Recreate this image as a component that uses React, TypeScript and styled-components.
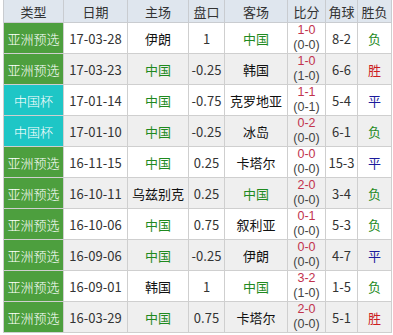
import React from 'react';
import styled, { createGlobalStyle } from 'styled-components';

const Global = createGlobalStyle`
  body {
    margin: 0;
    background: #fff;
    font-family: "Noto Sans CJK SC", "DejaVu Sans", sans-serif;
  }
`;

const Wrap = styled.div`
  padding-left: 3px;
  margin-top: -1px;
`;

const Table = styled.table`
  border-collapse: collapse;
  table-layout: fixed;
  width: 389px;
  font-size: 13px;
  color: #333;
`;

const Head = styled.th<{ w: number }>`
  width: ${p => p.w}px;
  height: 22px;
  padding: 0;
  background: #dfe6ee;
  border: 1px solid #c9ccd0;
  font-weight: normal;
  color: #333;
  text-align: center;
`;

const Row = styled.tr<{ alt: boolean }>`
  background: ${p => (p.alt ? '#efefef' : '#fff')};
`;

const Cell = styled.td<{ tone?: string }>`
  height: 30px;
  padding: 0;
  border: 1px solid #cfcfcf;
  text-align: center;
  white-space: nowrap;
  overflow: hidden;
  color: ${p => p.tone || '#333'};
`;

const TypeCell = styled(Cell)<{ cup: boolean }>`
  background: ${p => (p.cup ? '#1ec6c6' : '#4d9f3e')};
  color: #fff;
  font-weight: 300;
`;

const Score = styled.div`
  line-height: 15px;
  height: 15px;
  font-family: "Liberation Sans", Arial, sans-serif;
  font-size: 12.5px;
  color: #c2334d;
`;

const Half = styled(Score)`
  color: #444;
`;

const resultColor: Record<string, string> = {
  胜: '#cc1f1f',
  负: '#1f8a1f',
  平: '#1b1b9c',
};

const team = (name: string) => (name === '中国' ? '#1f8a1f' : '#111');

const rows = [
  ['亚洲预选', '17-03-28', '伊朗', '1', '中国', '1-0', '(0-0)', '8-2', '负'],
  ['亚洲预选', '17-03-23', '中国', '-0.25', '韩国', '1-0', '(1-0)', '6-6', '胜'],
  ['中国杯', '17-01-14', '中国', '-0.75', '克罗地亚', '1-1', '(0-1)', '5-4', '平'],
  ['中国杯', '17-01-10', '中国', '-0.25', '冰岛', '0-2', '(0-0)', '6-1', '负'],
  ['亚洲预选', '16-11-15', '中国', '0.25', '卡塔尔', '0-0', '(0-0)', '15-3', '平'],
  ['亚洲预选', '16-10-11', '乌兹别克', '0.25', '中国', '2-0', '(0-0)', '3-4', '负'],
  ['亚洲预选', '16-10-06', '中国', '0.75', '叙利亚', '0-1', '(0-0)', '5-3', '负'],
  ['亚洲预选', '16-09-06', '中国', '-0.25', '伊朗', '0-0', '(0-0)', '4-7', '平'],
  ['亚洲预选', '16-09-01', '韩国', '1', '中国', '3-2', '(1-0)', '1-5', '负'],
  ['亚洲预选', '16-03-29', '中国', '0.75', '卡塔尔', '2-0', '(0-0)', '5-1', '胜'],
];

const cols: [string, number][] = [
  ['类型', 59],
  ['日期', 63],
  ['主场', 60],
  ['盘口', 35],
  ['客场', 62],
  ['比分', 37],
  ['角球', 31],
  ['胜负', 33],
];

export default function App() {
  return (
    <Wrap>
      <Global />
      <Table>
        <thead>
          <tr>
            {cols.map(([t, w]) => (
              <Head key={t} w={w}>{t}</Head>
            ))}
          </tr>
        </thead>
        <tbody>
          {rows.map((r, i) => (
            <Row key={r[1]} alt={i % 2 === 1}>
              <TypeCell cup={r[0] === '中国杯'}>{r[0]}</TypeCell>
              <Cell>{r[1]}</Cell>
              <Cell tone={team(r[2])}>{r[2]}</Cell>
              <Cell>{r[3]}</Cell>
              <Cell tone={team(r[4])}>{r[4]}</Cell>
              <Cell>
                <Score>{r[5]}</Score>
                <Half>{r[6]}</Half>
              </Cell>
              <Cell>{r[7]}</Cell>
              <Cell tone={resultColor[r[8]]}>{r[8]}</Cell>
            </Row>
          ))}
        </tbody>
      </Table>
    </Wrap>
  );
}
